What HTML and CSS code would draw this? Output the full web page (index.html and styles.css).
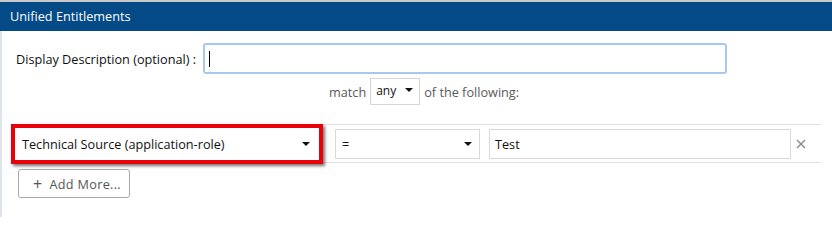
FILE: index.html
```html
<!DOCTYPE html>
<html>
<head>
<meta charset="utf-8">
<link rel="stylesheet" href="styles.css">
</head>
<body>
<div class="topline"></div>
<div class="header">Unified Entitlements</div>
<div class="panel">
  <div class="desc-row">
    <label class="desc-label">Display Description (optional) :</label>
    <div class="desc-input"><span class="caret"></span></div>
  </div>
  <div class="match-row">
    <span class="muted">match</span>
    <div class="mini-select"><span>any</span><span class="arrow"></span></div>
    <span class="muted">of the following:</span>
  </div>
  <div class="rule-row">
    <div class="select highlight"><span>Technical Source (application-role)</span><span class="arrow"></span></div>
    <div class="select op"><span>=</span><span class="arrow"></span></div>
    <div class="value">Test</div>
    <svg class="remove" width="10" height="10" viewBox="0 0 10 10"><path d="M1 1L9 9M9 1L1 9" stroke="#888" stroke-width="1.4"/></svg>
  </div>
  <button class="add-btn"><span class="plus">+</span>Add More...</button>
</div>
</body>
</html>
```
FILE: styles.css
```css
html, body { margin: 0; padding: 0; background: #fff; }
body { font-family: "Open Sans", "Noto Sans", sans-serif; font-size: 12px; color: #222; width: 832px; height: 217px; overflow: hidden; }
.topline { height: 2px; background: #c8c8c8; }
.header { height: 29px; background: #034a86; color: #fff; font-size: 12.7px; line-height: 29px; padding-left: 10px; }
.panel { border-left: 2px solid #dfe4ea; height: 186px; box-sizing: border-box; padding-top: 12px; }
.desc-row { display: flex; align-items: center; height: 31px; padding-left: 14px; }
.desc-label { width: 187px; font-size: 12.7px; color: #111; }
.desc-input { width: 516px; height: 27px; border: 2px solid #a9c7f3; border-radius: 3px; display: flex; align-items: center; padding-left: 4px; }
.caret { width: 1px; height: 16px; background: #000; }
.match-row { display: flex; align-items: center; margin-top: 4px; padding-left: 327px; height: 27px; font-size: 12.7px; }
.muted { color: #5a5a5a; }
.mini-select { border: 1px solid #d6d6d6; margin: 0 4px; display: flex; align-items: flex-start; justify-content: space-between; padding: 3px 6px 0 5px; box-sizing: border-box; width: 50px; height: 27px; font-size: 12px; color: #111; }
.mini-select .arrow { margin-top: 6px; }
.arrow { width: 0; height: 0; border-left: 4px solid transparent; border-right: 4px solid transparent; border-top: 4px solid #111; }
.rule-row { display: flex; align-items: center; margin-top: 19px; margin-left: 9px; width: 810px; height: 37px; border-top: 1px solid #e2e2e2; border-bottom: 1px solid #e2e2e2; }
.select { display: flex; align-items: center; justify-content: space-between; box-sizing: border-box; height: 30px; border: 1px solid #d9d9d9; background: #fff; font-size: 12.7px; color: #111; }
.highlight { width: 312px; height: 40px; border: 4px solid #e8000b; padding: 0 9px 0 7px; box-shadow: 2px 2px 3px rgba(0,0,0,.55); }
.op { width: 145px; margin-left: 12px; padding: 0 7px 0 6px; }
.value { width: 302px; height: 30px; box-sizing: border-box; border: 1px solid #d9d9d9; margin-left: 9px; display: flex; align-items: center; padding-left: 5px; font-size: 12.7px; color: #111; }
.remove { margin-left: 5px; }
.add-btn { margin: 6px 0 0 16px; width: 112px; height: 29px; border: 1px solid #a9a9a9; border-radius: 3px; background: #fff; font-family: inherit; font-size: 12.7px; color: #555; display: flex; align-items: center; padding: 0 0 0 14px; letter-spacing: 0.3px; }
.plus { font-size: 16px; margin-right: 7px; line-height: 1; }
```
